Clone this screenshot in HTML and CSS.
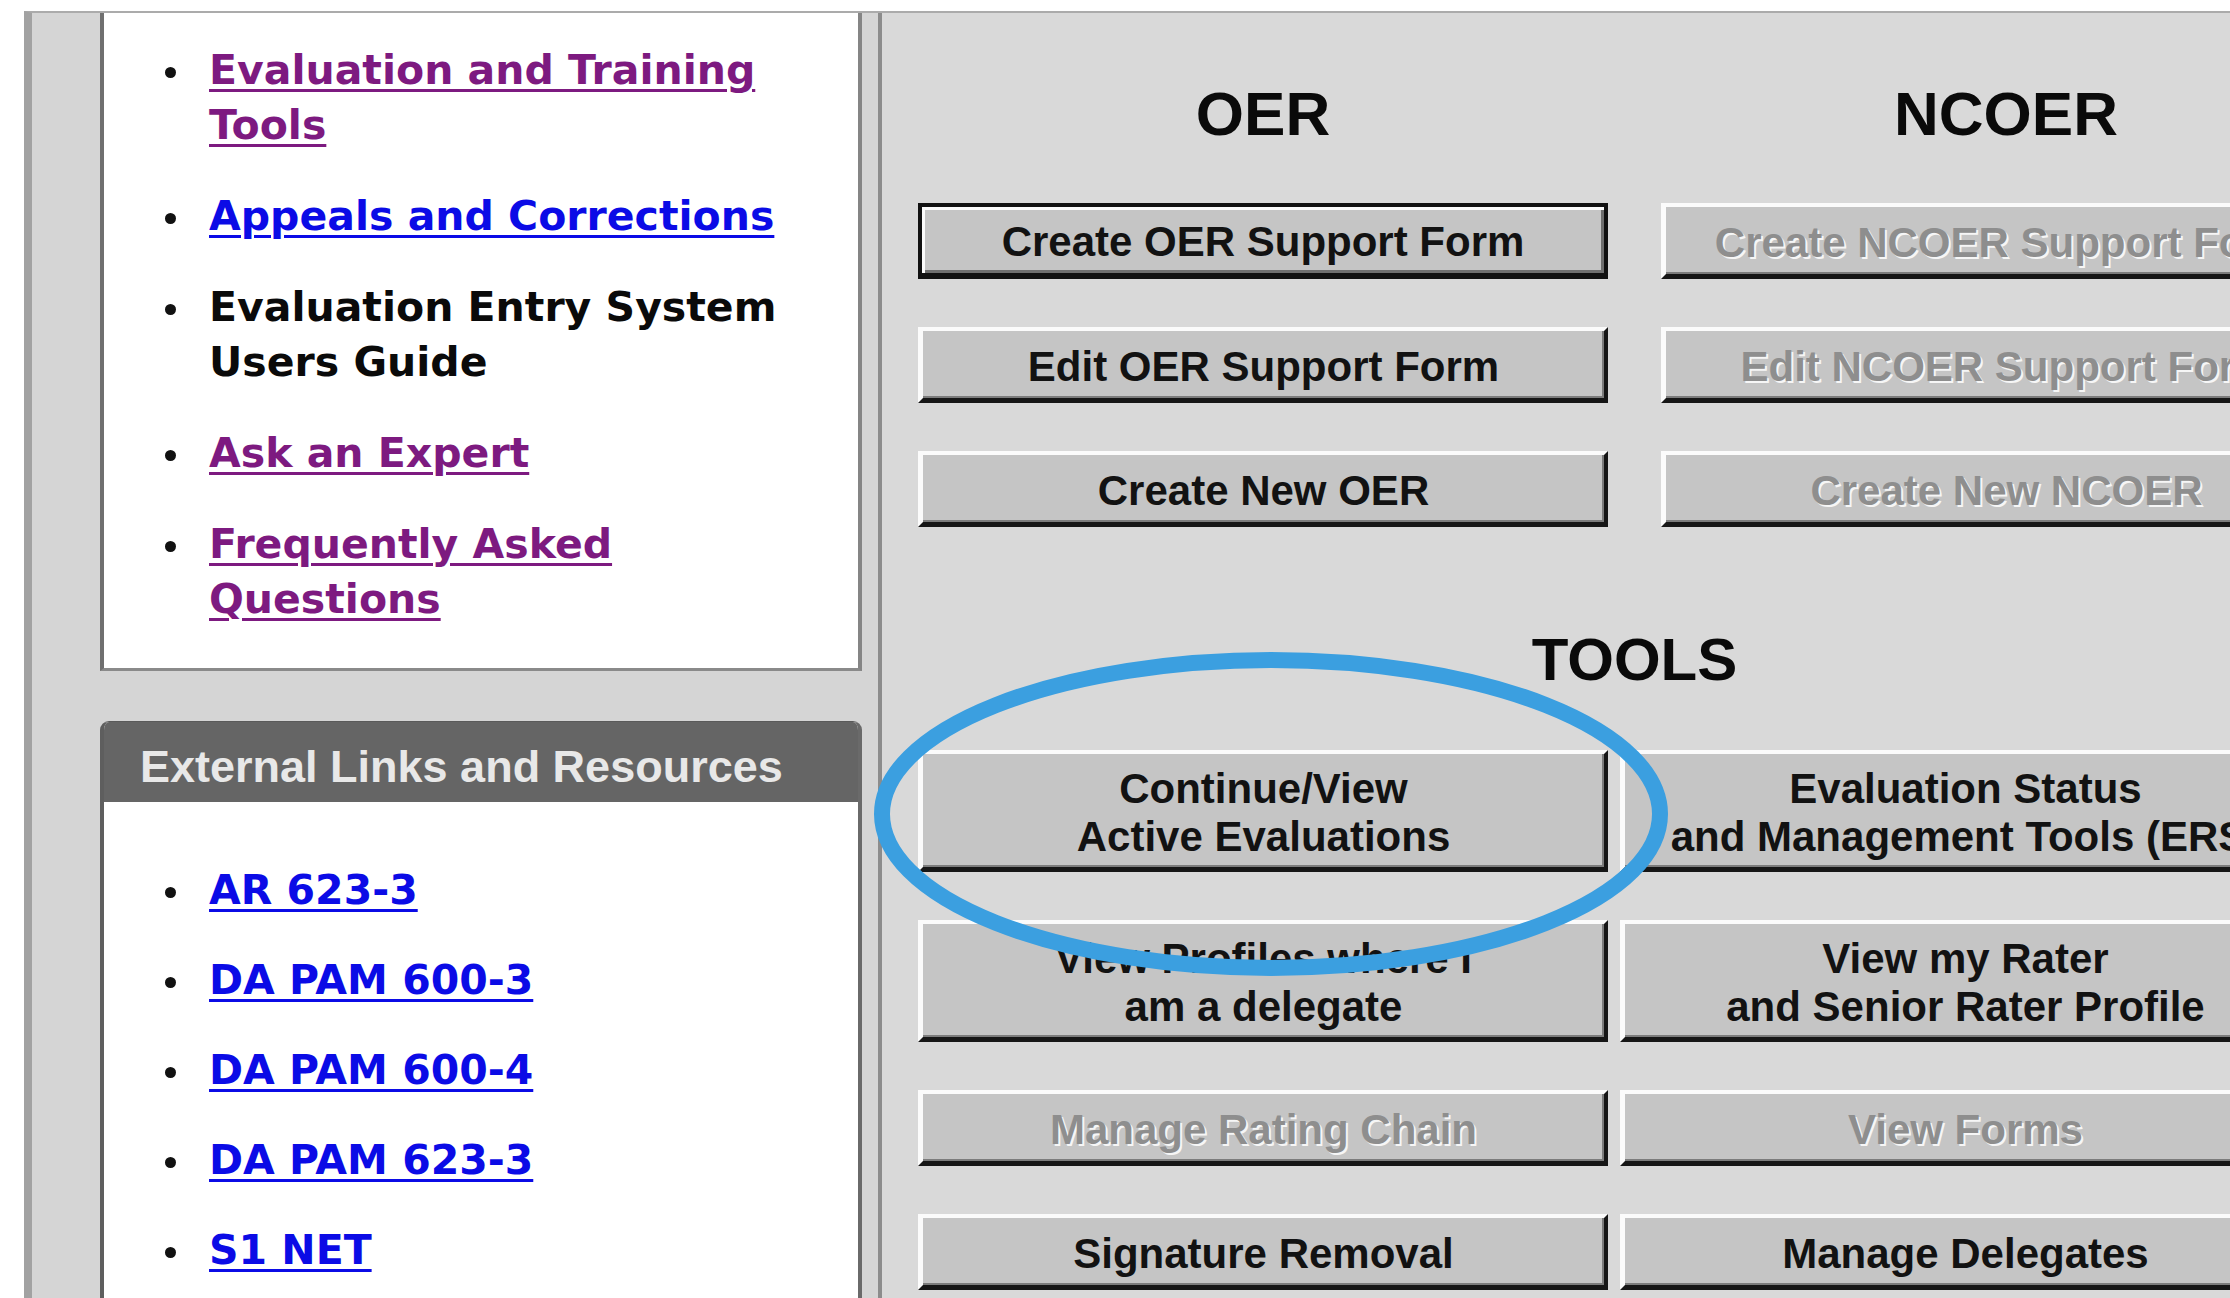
FILE: index.html
```html
<!DOCTYPE html>
<html lang="en">
<head>
<meta charset="utf-8">
<title>Evaluation Entry System</title>
<link rel="stylesheet" href="styles.css">
</head>
<body>
<div class="frame">
  <aside class="sidebar">
    <section class="panel panel-top">
      <ul class="links links-top">
        <li><a class="visited" href="#">Evaluation and Training Tools</a></li>
        <li><a class="link" href="#">Appeals and Corrections</a></li>
        <li><span class="plain">Evaluation Entry System Users Guide</span></li>
        <li><a class="visited" href="#">Ask an Expert</a></li>
        <li><a class="visited" href="#">Frequently Asked Questions</a></li>
      </ul>
    </section>
    <section class="panel panel-ext">
      <h2 class="panel-head">External Links and Resources</h2>
      <ul class="links links-ext">
        <li><a class="link" href="#">AR 623-3</a></li>
        <li><a class="link" href="#">DA PAM 600-3</a></li>
        <li><a class="link" href="#">DA PAM 600-4</a></li>
        <li><a class="link" href="#">DA PAM 623-3</a></li>
        <li><a class="link" href="#">S1 NET</a></li>
      </ul>
    </section>
  </aside>
  <main class="main">
    <div class="eval-grid">
      <div class="eval-col">
        <h1 class="col-title">OER</h1>
        <button class="btn btn-default">Create OER Support Form</button>
        <button class="btn">Edit OER Support Form</button>
        <button class="btn">Create New OER</button>
      </div>
      <div class="eval-col">
        <h1 class="col-title">NCOER</h1>
        <button class="btn btn-disabled">Create NCOER Support Form</button>
        <button class="btn btn-disabled">Edit NCOER Support Form</button>
        <button class="btn btn-disabled">Create New NCOER</button>
      </div>
    </div>
    <h1 class="tools-title">TOOLS</h1>
    <div class="tools-grid">
      <button class="btn">Continue/View<br>Active Evaluations</button>
      <button class="btn">Evaluation Status<br>and Management Tools (ERS)</button>
      <button class="btn">View Profiles where I<br>am a delegate</button>
      <button class="btn">View my Rater<br>and Senior Rater Profile</button>
      <button class="btn btn-disabled">Manage Rating Chain</button>
      <button class="btn btn-disabled">View Forms</button>
      <button class="btn">Signature Removal</button>
      <button class="btn">Manage Delegates</button>
    </div>
  </main>
</div>
<svg class="highlight" width="796" height="326" viewBox="0 0 796 326" aria-hidden="true">
  <ellipse cx="398" cy="163" rx="389" ry="154" fill="none" stroke="#3b9fe0" stroke-width="16"/>
</svg>
</body>
</html>
```
FILE: styles.css
```css
html, body {
  margin: 0;
  height: 100%;
  overflow: hidden;
  background: #ffffff;
}

.frame {
  display: flex;
  box-sizing: border-box;
  margin: 11px 0 0 24px;
  height: calc(100vh - 11px);
  border-top: 2px solid #ababab;
  border-left: 8px solid #a2a2a2;
  background: #d5d5d5;
  overflow: hidden;
}

/* ---------- sidebar ---------- */
.sidebar {
  flex: 0 0 850px;
  box-sizing: border-box;
  padding: 0 16px 0 68px;
  border-right: 4px solid #8c8c8c;
  background: #d5d5d5;
}

.panel {
  background: #ffffff;
  border-left: 4px solid #6f6f6f;
  border-right: 4px solid #858585;
}

.panel-top {
  padding: 30px 0 41px;
  border-bottom: 3px solid #8a8a8a;
}

.panel-ext {
  margin-top: 50px;
  border-radius: 9px 9px 0 0;
  overflow: hidden;
  border-left-color: #5e5e5e;
  border-right-color: #6a6a6a;
  border-top: 1px solid #5a5a5a;
  height: 700px;
}

.panel-head {
  margin: 0;
  box-sizing: border-box;
  height: 80px;
  padding: 9px 0 0 36px;
  background: #656565;
  color: #e8e8e8;
  font: bold 45px/71px "Liberation Sans", Arial, sans-serif;
  white-space: nowrap;
}

.links {
  margin: 0;
  padding: 0 30px 0 105px;
  list-style: none;
  font: bold 41px/55px "DejaVu Sans", Verdana, sans-serif;
}

.links li {
  position: relative;
  margin-bottom: 36px;
}

.links li:last-child {
  margin-bottom: 0;
}

.links li::before {
  content: "";
  position: absolute;
  left: -44px;
  top: 24px;
  width: 11px;
  height: 11px;
  border-radius: 50%;
  background: #111111;
}

.links-ext {
  padding-top: 61px;
}

.links-ext li {
  margin-bottom: 35px;
}

.links a {
  text-decoration: underline;
  text-decoration-thickness: 3px;
  text-underline-offset: 5px;
}

.visited {
  color: #7d1a80;
}

.link {
  color: #0b0be6;
}

.plain {
  color: #0a0a0a;
}

/* ---------- main ---------- */
.main {
  flex: 0 0 auto;
  width: 1469px;
  box-sizing: border-box;
  padding: 66px 0 0 36px;
  background: #d9d9d9;
}

.eval-grid {
  display: grid;
  grid-template-columns: 690px 690px;
  column-gap: 53px;
  width: 1433px;
}

.eval-col {
  display: flex;
  flex-direction: column;
  gap: 48px;
}

.col-title {
  margin: 0 0 6px;
  text-align: center;
  color: #0a0a0a;
  font: bold 62px/70px "Liberation Sans", Arial, sans-serif;
}

.tools-title {
  margin: 98px 0 55px;
  width: 1433px;
  text-align: center;
  color: #0a0a0a;
  font: bold 60px/70px "Liberation Sans", Arial, sans-serif;
}

.tools-grid {
  display: grid;
  grid-template-columns: 690px 690px;
  grid-template-rows: 122px 122px 76px 76px;
  column-gap: 12px;
  row-gap: 48px;
}

.btn {
  display: flex;
  align-items: center;
  justify-content: center;
  box-sizing: border-box;
  height: 76px;
  margin: 0;
  padding: 4px 0 0;
  border-style: solid;
  border-width: 4px 4px 5px 5px;
  border-color: #fbfbfb #161616 #161616 #fbfbfb;
  box-shadow: inset -2px -2px 0 #7c7c7c;
  background: #c5c5c5;
  color: #121212;
  font: bold 42px/48px "Liberation Sans", Arial, sans-serif;
  text-align: center;
  white-space: nowrap;
  cursor: pointer;
}

.tools-grid .btn {
  height: auto;
}

.btn-default {
  border: 4px solid #111111;
  border-bottom-width: 6px;
  box-shadow: inset 3px 3px 0 #fbfbfb, inset -3px -3px 0 #6f6f6f;
}

.btn-disabled {
  color: #8e8e8e;
  text-shadow: 2px 2px 0 #f6f6f6;
  cursor: default;
}

/* ---------- annotation ---------- */
.highlight {
  position: absolute;
  left: 873px;
  top: 651px;
  pointer-events: none;
}
```
